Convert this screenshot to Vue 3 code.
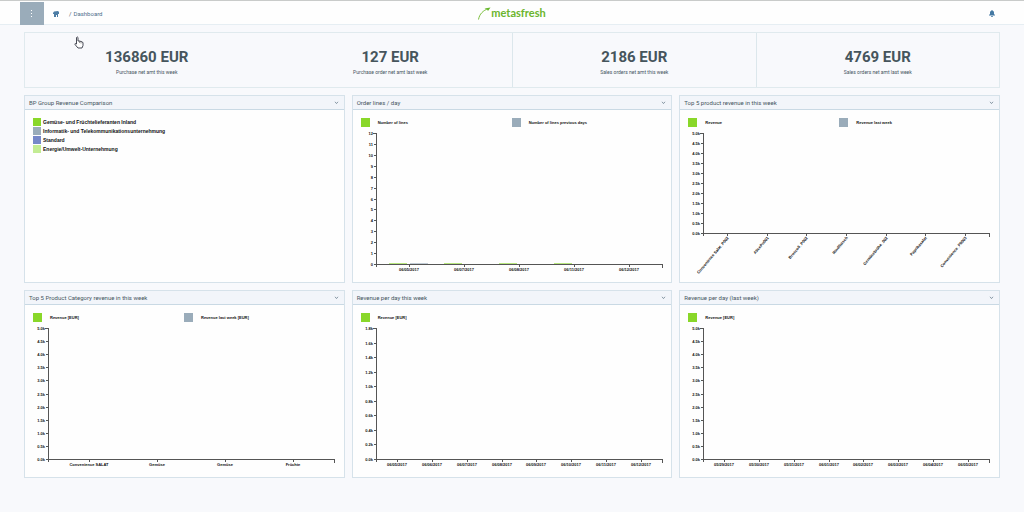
<script setup>
import { ref, onMounted, onBeforeUnmount } from 'vue'

const GREEN = '#89d729'
const STEEL = '#9aacba'

const kpis = [
  { value: '136860 EUR', label: 'Purchase net amt this week' },
  { value: '127 EUR', label: 'Purchase order net amt last week' },
  { value: '2186 EUR', label: 'Sales orders net amt this week' },
  { value: '4769 EUR', label: 'Sales orders net amt last week' }
]

const groups = [
  { name: 'Gemüse- und Früchtelieferanten Inland', color: GREEN },
  { name: 'Informatik- und Telekommunikationsunternehmung', color: STEEL },
  { name: 'Standard', color: '#7688c9' },
  { name: 'Energie/Umwelt-Unternehmung', color: '#c3ec94' }
]

const thousands = (max, step) => {
  const out = []
  for (let i = Math.round(max / step); i >= 0; i--) out.push((i * step).toFixed(1) + 'k')
  return out
}

const panels = [
  { title: 'BP Group Revenue Comparison', groups },
  {
    title: 'Order lines / day',
    series: ['Number of lines', 'Number of lines previous days'],
    y: ['12', '11', '10', '9', '8', '7', '6', '5', '4', '3', '2', '1', '0'],
    x: ['06/05/2017', '06/07/2017', '06/08/2017', '06/11/2017', '06/12/2017'],
    bars: [[0, 0, GREEN], [0, 1, STEEL], [1, 0, GREEN], [2, 0, GREEN], [3, 0, GREEN]]
  },
  {
    title: 'Top 5 product revenue in this week',
    series: ['Revenue', 'Revenue last week'],
    y: thousands(5, 0.5),
    x: ['Convenience Salat_P002', 'AlicePo001', 'Broccoli_P002', 'Rindfleisch', 'Gemüsebrühe_002', 'Paprikasalat', 'Convenience_P0003'],
    slanted: true
  },
  {
    title: 'Top 5 Product Category revenue in this week',
    series: ['Revenue [EUR]', 'Revenue last week [EUR]'],
    y: thousands(5, 0.5),
    x: ['Convenience SALAT', 'Gemüse', 'Gemüse', 'Früchte']
  },
  {
    title: 'Revenue per day this week',
    series: ['Revenue [EUR]'],
    y: thousands(1.8, 0.2),
    x: ['06/05/2017', '06/06/2017', '06/07/2017', '06/08/2017', '06/09/2017', '06/10/2017', '06/11/2017', '06/12/2017']
  },
  {
    title: 'Revenue per day (last week)',
    series: ['Revenue [EUR]'],
    y: thousands(5, 0.5),
    x: ['05/29/2017', '05/30/2017', '05/31/2017', '06/01/2017', '06/02/2017', '06/03/2017', '06/04/2017', '06/05/2017']
  }
]

const grid = ref(null)
const chartWidth = ref(318)
const TOP = 22
const LEFT = 23
const axisWidth = () => chartWidth.value - 33
const bottom = (p) => (p.slanted ? 122 : 153)
const yAt = (p, i) => Math.round(TOP + (i * (bottom(p) - TOP)) / (p.y.length - 1))
const step = (p) => axisWidth() / (p.x.length + 0.2)
const xAt = (p, i) => Math.round(LEFT + step(p) * (0.6 + i))

let observer
const measure = () => {
  const panel = grid.value?.querySelector('.panel-body')
  if (panel) chartWidth.value = Math.floor(panel.clientWidth)
}
onMounted(() => {
  measure()
  observer = new ResizeObserver(measure)
  observer.observe(grid.value)
})
onBeforeUnmount(() => observer?.disconnect())
</script>

<template>
  <div class="app">
    <header class="topbar">
      <button class="menu" aria-label="Menu">
        <svg width="4" height="10" viewBox="0 0 4 10"><path d="M1 1h1v1H1zM1 4h1v1H1zM1 7h1v1H1z" fill="#fff" /></svg>
      </button>
      <nav class="crumbs">
        <a href="#" class="home" aria-label="Home">
          <svg width="6" height="6" viewBox="0 0 6 6"><path d="M0 2 1 .5 5 0 6 1v2H5v3H4V4H3v2H1V3H0z" fill="#4d7da5" /></svg>
        </a>
        <span class="slash">/</span>
        <a href="#">Dashboard</a>
      </nav>
      <a href="#" class="brand">
        <svg width="13" height="13" viewBox="0 0 13 13">
          <path d="M.5 12.5C1.500 7 5 3.500 10.500 1.500" fill="none" stroke="#7bbf3d" stroke-width="1" />
          <path d="M6.500 1.500 12.500 .5 10 4 9 2.600z" fill="#68b82e" />
        </svg>
        <span>metasfresh</span>
      </a>
      <button class="bell" aria-label="Notifications">
        <svg width="6" height="7" viewBox="0 0 6 7"><path d="M2.500 0h1v.7Q5 1 5 2.500V4l1 1v.6H0V5l1-1V2.500Q1 1 2.500.7zM2 6h2v.8H2z" fill="#4479a3" /></svg>
      </button>
    </header>

    <main>
      <section class="kpis">
        <div v-for="k in kpis" :key="k.label" class="kpi">
          <strong>{{ k.value }}</strong>
          <span>{{ k.label }}</span>
        </div>
      </section>

      <section ref="grid" class="panels">
        <article v-for="p in panels" :key="p.title" class="panel">
          <header>
            <h2>{{ p.title }}</h2>
            <button aria-label="Collapse">
              <svg width="5" height="4" viewBox="0 0 5 4"><path d="M1 .8 2.500 2.600 4 .8" fill="none" stroke="#7c8d9c" stroke-width=".9" /></svg>
            </button>
          </header>
          <div class="panel-body">
            <ul v-if="p.groups" class="groups">
              <li v-for="g in p.groups" :key="g.name">
                <i :style="{ background: g.color }"></i>{{ g.name }}
              </li>
            </ul>
            <template v-else>
              <ul class="legend">
                <li v-for="(s, i) in p.series" :key="s"><i :class="{ alt: i === 1 }"></i>{{ s }}</li>
              </ul>
              <svg class="chart" :width="chartWidth" height="164">
                <g shape-rendering="crispEdges">
                  <path :d="`M${LEFT - 3} ${TOP + .5}H${LEFT + .5}V${bottom(p) + .5}`" class="axis" />
                  <path :d="`M${LEFT + .5} ${bottom(p) + 3}V${bottom(p) + .5}H${LEFT + axisWidth()}v3`" class="axis" />
                  <path v-for="(t, i) in p.y" :key="'y' + i" :d="`M${LEFT - 2} ${yAt(p, i) + .5}h3`" class="axis" />
                  <path v-for="(t, i) in p.x" :key="'x' + i" :d="`M${xAt(p, i) + .5} ${bottom(p)}v3`" class="axis" />
                  <rect
                    v-for="(b, i) in p.bars || []" :key="'b' + i"
                    :x="xAt(p, b[0]) - 20 + b[1] * 21" :y="bottom(p) - 1" width="18" height="1" :fill="b[2]" opacity=".6"
                  />
                </g>
                <text v-for="(t, i) in p.y" :key="'l' + i" :x="LEFT - 3" :y="yAt(p, i) + 2" text-anchor="end">{{ t }}</text>
                <template v-for="(t, i) in p.x" :key="'t' + i">
                  <text
                    v-if="p.slanted" text-anchor="end"
                    :transform="`translate(${xAt(p, i) + 2} ${bottom(p) + 5}) rotate(-50)`"
                  >{{ t }}</text>
                  <text v-else :x="xAt(p, i)" :y="bottom(p) + 7" text-anchor="middle">{{ t }}</text>
                </template>
              </svg>
            </template>
          </div>
        </article>
      </section>
    </main>

    <svg class="pointer" width="10" height="13" viewBox="0 0 10 13">
      <path d="M2.500 7V1.500Q3.300 .3 4 1.500V5l1.500 0 1.500.5 1.500.5.5 1v2.500L8 12H4L1 8.500Q.5 7 2.500 8z" fill="#fff" stroke="#353945" stroke-width=".9" />
      <path d="M5.500 5v2M7 5.500v2" stroke="#555" stroke-width=".6" />
    </svg>
  </div>
</template>

<style>
body {
  margin: 0;
  background: #f8f9fc;
}
</style>

<style scoped>
.app {
  position: relative;
  min-height: 100vh;
  font-family: Roboto, "Liberation Sans", sans-serif;
  color: #46555f;
}
button {
  border: 0;
  padding: 0;
  background: none;
  display: flex;
  align-items: center;
  justify-content: center;
}
a {
  color: #4f6f8c;
  text-decoration: none;
}
ul {
  list-style: none;
  margin: 0;
  padding: 0;
}
.topbar {
  display: grid;
  grid-template-columns: 1fr auto 1fr;
  height: 22px;
  padding: 1px 20px 0;
  margin-bottom: 7px;
  background: #fefefe;
  border-top: 1px solid #c9cbca;
  border-bottom: 1px solid #e6eef3;
}
.topbar > * {
  grid-row: 1;
}
.menu {
  grid-column: 1;
  width: 24px;
  height: 23px;
  background: #9aacba;
}
.crumbs {
  grid-column: 1;
  margin-left: 33px;
  display: flex;
  align-items: center;
  font-size: 6px;
}
.home {
  display: flex;
  margin-right: 10px;
}
.slash {
  margin-right: 2px;
}
.brand {
  grid-column: 2;
  display: flex;
  align-items: center;
  color: #6bb52d;
  font: 700 11px/12px Lato, sans-serif;
}
.brand span {
  padding-bottom: 1px;
}
.bell {
  grid-column: 3;
  justify-self: end;
  margin-right: 9px;
}
main {
  padding: 0 24px 34px;
}
.kpis {
  display: grid;
  grid-template-columns: repeat(4, 1fr);
  border: 1px solid #e0eaee;
  margin-bottom: 7px;
}
.kpi {
  display: flex;
  flex-direction: column;
  align-items: center;
  height: 39px;
  padding-top: 15px;
}
.kpi:nth-child(n + 3) {
  border-left: 1px solid #dce7ec;
}
.kpi strong {
  font-size: 15px;
  line-height: 18px;
  font-weight: 700;
  color: #46555c;
}
.kpi span {
  font-size: 5px;
  line-height: 6px;
  margin-top: 3px;
}
.panels {
  display: grid;
  grid-template-columns: repeat(3, 1fr);
  gap: 7px;
}
.panel {
  border: 1px solid #d6e2ea;
  background: #fefefe;
  height: 186px;
  min-width: 0;
}
.panel header {
  display: flex;
  justify-content: space-between;
  align-items: center;
  height: 13px;
  padding: 0 5px 0 4px;
  background: #f2f5fa;
  border-bottom: 1px solid #c9d9e4;
}
h2 {
  margin: 0;
  font-size: 6px;
  font-weight: 400;
}
.groups {
  padding: 8px;
  font: 700 5px/8px "Liberation Sans", sans-serif;
  color: #111;
}
.groups li {
  display: flex;
  gap: 2px;
  margin-bottom: 1px;
  height: 8px;
}
.groups i {
  width: 8px;
  height: 8px;
}
.legend {
  display: grid;
  grid-template-columns: 151px 1fr;
  height: 9px;
  padding: 8px 8px 0;
  margin-bottom: -16px;
  font: 700 4px/9px "Liberation Sans", sans-serif;
  color: #111;
}
.legend li {
  display: flex;
  gap: 8px;
}
.legend i {
  width: 9px;
  height: 9px;
  background: #89d729;
}
.legend i.alt {
  background: #9aacba;
}
.chart {
  display: block;
  overflow: visible;
}
.chart text {
  font: 700 4px "Liberation Sans", sans-serif;
  fill: #111;
}
.axis {
  fill: none;
  stroke: #555;
  stroke-width: 1;
}
.pointer {
  position: absolute;
  left: 74px;
  top: 36px;
}
</style>
